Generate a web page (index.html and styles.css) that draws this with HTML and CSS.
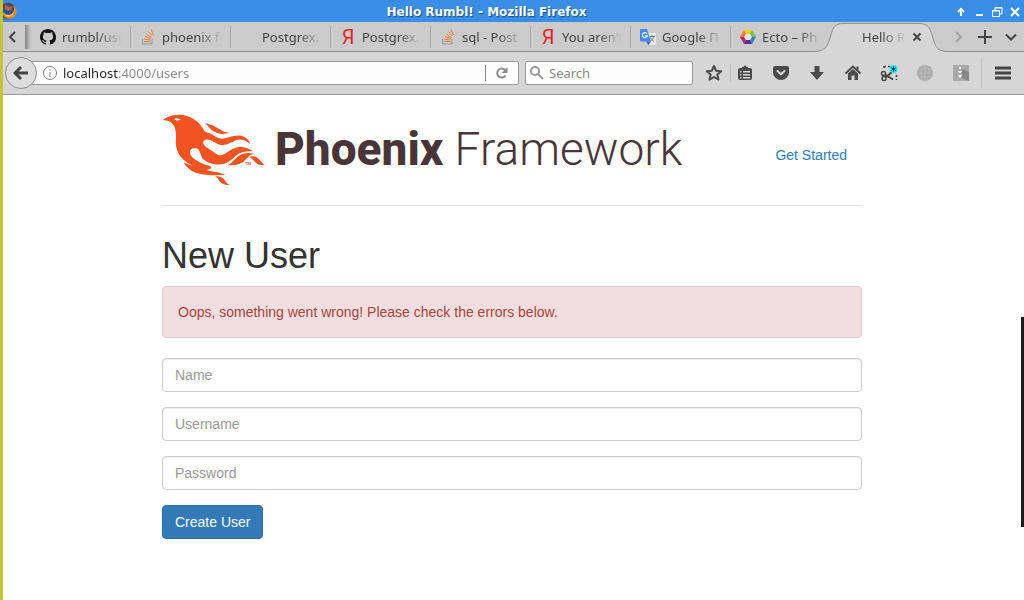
FILE: index.html
```html
<!DOCTYPE html>
<html lang="en">
  <head>
    <meta charset="UTF-8" />
    <meta name="viewport" content="width=device-width, initial-scale=1.0" />
    <title>Hello Rumbl!</title>
    <link rel="stylesheet" href="styles.css">
  </head>
  <body>
    <!-- Window title bar -->
    <div class="titlebar">
      <svg class="app-icon" width="18" height="18" viewBox="0 0 18 18">
        <circle cx="8" cy="9" r="8" fill="#7a2f12" />
        <circle cx="8" cy="8" r="6" fill="#2f4f9c" />
        <path d="M5 2 L8 5 L12 4 L11 8 L8 9 L5 7 Z" fill="#c9642a" />
        <path d="M1 5 C2 12 6 14 10 13 C14 12 15 7 13 3 C18 6 17 12 14 15 C9 19 1 16 1 5 Z" fill="#f08a1c" />
        <path d="M3 10 C6 14 12 14 14 9 C14 14 6 18 3 10 Z" fill="#ffd45a" />
      </svg>
      <span class="window-title">Hello Rumbl! - Mozilla Firefox</span>
      <div class="window-buttons">
        <button aria-label="Roll up"><svg width="12" height="12" viewBox="0 0 12 12"><path d="M6 10V3M3 6l3-3 3 3" /></svg></button>
        <button aria-label="Minimize"><svg width="12" height="12" viewBox="0 0 12 12"><path d="M3 9h7" /></svg></button>
        <button aria-label="Restore"><svg width="12" height="12" viewBox="0 0 12 12"><path class="thin" d="M4 4V1.500h7V8H8.500M1.500 4.500h7v6h-7zM4 2h7M1 5h7" /></svg></button>
        <button aria-label="Close"><svg width="12" height="12" viewBox="0 0 12 12"><path d="M2 2l8 8M10 2l-8 8" /></svg></button>
      </div>
    </div>

    <!-- Tabs -->
    <div class="tabbar">
      <button class="scroll-left" aria-label="Scroll tabs left">
        <svg width="12" height="14" viewBox="0 0 12 14"><path d="M8 2L3 7l5 5" /></svg>
      </button>
      <div class="tab-shade"></div>
      <div class="tabs">
        <a class="tab" href="#">
          <svg class="favicon" viewBox="0 0 16 16"><path fill="#111" d="M8 0C3.580 0 0 3.580 0 8c0 3.540 2.290 6.530 5.470 7.590.4.070.550-.170.550-.380 0-.190-.010-.820-.010-1.490-2.010.370-2.530-.490-2.690-.940-.090-.230-.480-.940-.820-1.130-.280-.150-.680-.520-.010-.530.630-.010 1.080.580 1.230.820.720 1.210 1.870.870 2.330.660.070-.520.280-.870.510-1.070-1.780-.2-3.640-.890-3.640-3.950 0-.870.310-1.590.820-2.150-.080-.2-.360-1.020.080-2.120 0 0 .670-.210 2.200.820a7.600 7.600 0 0 1 4 0c1.530-1.040 2.200-.820 2.200-.820.440 1.100.160 1.920.080 2.120.510.560.820 1.270.820 2.150 0 3.070-1.870 3.750-3.650 3.950.290.250.540.730.540 1.480 0 1.070-.010 1.930-.010 2.200 0 .210.150.460.550.380A8 8 0 0 0 16 8c0-4.420-3.580-8-8-8z" /></svg>
          <span class="tab-label">rumbl/use</span>
        </a>
        <a class="tab" href="#">
          <svg class="favicon" viewBox="0 0 16 16"><path class="so-tray" d="M2.500 10v5h9.500v-5" /><path class="so-stack" d="M4 12.500h6.500M4 10l6.500 1M5 7.500l6 2M6.500 5l5 3.500M8.500 2.500l4 4.500M11 .5l2.500 5.500" /></svg>
          <span class="tab-label">phoenix f</span>
        </a>
        <a class="tab" href="#">
          <span class="favicon"></span>
          <span class="tab-label">Postgrex.</span>
        </a>
        <a class="tab" href="#">
          <span class="favicon yandex">Я</span>
          <span class="tab-label">Postgrex.</span>
        </a>
        <a class="tab" href="#">
          <svg class="favicon" viewBox="0 0 16 16"><path class="so-tray" d="M2.500 10v5h9.500v-5" /><path class="so-stack" d="M4 12.500h6.500M4 10l6.500 1M5 7.500l6 2M6.500 5l5 3.500M8.500 2.500l4 4.500M11 .5l2.500 5.500" /></svg>
          <span class="tab-label">sql - Post</span>
        </a>
        <a class="tab" href="#">
          <span class="favicon yandex">Я</span>
          <span class="tab-label">You aren't</span>
        </a>
        <a class="tab" href="#">
          <svg class="favicon" viewBox="0 0 16 16">
            <path fill="#e8e8e8" d="M6 4h9q1 0 1 1v10q0 1-1 1H9z" />
            <path fill="#4688f1" d="M1 0h6l4 12.500H1q-1 0-1-1V1q0-1 1-1z" />
            <path fill="#3060c0" d="M6 12.500h5L8.500 16z" />
            <path fill="none" stroke="#fff" stroke-width="1.300" d="M7 4.800A2.500 2.500 0 1 0 7.300 6.800H5" />
            <path fill="none" stroke="#6b7a80" d="M9.500 7.500h5.500M12 6v1.500M13.500 8c-.5 2-2 3.500-3 4M10.500 8.500c.5 1.500 2 3 3.500 4" />
          </svg>
          <span class="tab-label">Google П</span>
        </a>
        <a class="tab last" href="#">
          <svg class="favicon" viewBox="0 0 16 16">
            <path fill="#f3d21b" d="M4 1h8L10 5H6z" />
            <path fill="#7bbf3a" d="M12 1l4 7-5 0-1.500-3z" />
            <path fill="#2f7fd0" d="M16 8l-4 7-2-4 1.500-3z" />
            <path fill="#5a2d91" d="M12 15H4l2-4h4z" />
            <path fill="#b02a6a" d="M4 15L0 8h4.500L6 11z" />
            <path fill="#ef7d22" d="M0 8l4-7 2 4-1.500 3z" />
            <path fill="#e4e4e4" d="M6 5h4l2 3-2 3H6L4 8z" />
          </svg>
          <span class="tab-label">Ecto – Ph</span>
        </a>
        <a class="tab active" href="#">
          <svg class="tab-shape" width="134" height="30" viewBox="0 0 134 30">
            <path d="M0 29.500C13 29.500 14 22 17 13C19 5 21 1.500 29 1.500H105C113 1.500 116 5 118 13C121 22 121 29.500 134 29.500V30H0z" fill="#d6d6d6" />
            <path d="M0 29.500C13 29.500 14 22 17 13C19 5 21 1.500 29 1.500H105C113 1.500 116 5 118 13C121 22 121 29.500 134 29.500" fill="none" stroke="#8f8f8f" />
          </svg>
          <span class="favicon"></span>
          <span class="tab-label">Hello R</span>
          <svg class="tab-close" width="10" height="10" viewBox="0 0 10 10"><path d="M1.500 1.500l7 7M8.500 1.500l-7 7" /></svg>
        </a>
      </div>
      <div class="tab-actions">
        <button class="faded" aria-label="Scroll tabs right"><svg width="14" height="16" viewBox="0 0 14 16"><path d="M4 3l5 5-5 5" /></svg></button>
        <button aria-label="New tab"><svg width="16" height="16" viewBox="0 0 16 16"><path d="M8 1v14M1 8h14" /></svg></button>
        <button aria-label="List all tabs"><svg width="14" height="16" viewBox="0 0 14 16"><path d="M2 5.500l5 5 5-5" /></svg></button>
      </div>
    </div>

    <!-- Navigation toolbar -->
    <div class="toolbar">
      <button class="back" aria-label="Back">
        <svg width="16" height="16" viewBox="0 0 16 16"><path d="M2.500 8H15M8 2L2 8l6 6" /></svg>
      </button>
      <div class="urlbar">
        <svg class="info" width="14" height="14" viewBox="0 0 14 14"><circle cx="7" cy="7" r="6.500" /><path d="M7 6v5M7 3v1.500" /></svg>
        <input class="url-input" type="text" aria-label="Address" value="localhost:4000/users" />
        <button class="reload" aria-label="Reload">
          <svg width="14" height="14" viewBox="0 0 14 14"><path d="M10.500 9.500A4.500 4.500 0 1 1 10 4" /><path class="tip" d="M12.500 1v6h-6z" /></svg>
        </button>
      </div>
      <div class="searchbar">
        <svg width="14" height="14" viewBox="0 0 14 14"><circle cx="5" cy="5" r="4" /><path d="M8 8l5 5" /></svg>
        <input class="search-input" type="text" aria-label="Search" placeholder="Search" />
      </div>
      <div class="tools">
        <button class="star" aria-label="Bookmark this page"><svg viewBox="0 0 18 18"><path fill="none" stroke="#4a4a4a" stroke-width="2" stroke-linejoin="round" d="M9 2l2.100 4.700 5.100.5-3.800 3.400 1.100 5L9 13l-4.500 2.600 1.100-5L1.800 7.200l5.100-.5z" /></svg></button>
        <button aria-label="Show bookmarks"><svg viewBox="0 0 18 18"><path fill="#4a4a4a" fill-rule="evenodd" d="M6 3h1.500a1.500 1.500 0 0 1 3 0H12v1h2q2 0 2 2v8q0 2-2 2H4q-2 0-2-2V6q0-2 2-2h2zM4 7v1.500h1.500V7zM7 7v1.500h7V7zM4 10v1.500h1.500V10zM7 10v1.500h7V10zM4 13v1.500h1.500V13zM7 13v1.500h7V13z" /></svg></button>
        <button aria-label="Save to Pocket"><svg viewBox="0 0 18 18"><path fill="#4a4a4a" d="M3 2h12q2 0 2 2v4.500a8 7.500 0 0 1-16 0V4q0-2 2-2z" /><path fill="none" stroke="#d6d6d6" stroke-width="2" stroke-linecap="round" stroke-linejoin="round" d="M5.500 7L9 10.300 12.500 7" /></svg></button>
        <button aria-label="Downloads"><svg viewBox="0 0 18 18"><path fill="#4a4a4a" d="M6.500 2h5v6H16l-7 8-7-8h4.500z" /></svg></button>
        <button aria-label="Home"><svg viewBox="0 0 18 18"><path fill="#4a4a4a" d="M4 9.500L9 5l5 4.500V16h-3.500v-4.500h-3V16H4z" /><path fill="none" stroke="#4a4a4a" stroke-width="2" d="M1.500 9.500L9 2.500l7.500 7" /><path fill="#4a4a4a" d="M12.500 2.500h2v4l-2-2z" /></svg></button>
        <button aria-label="Screenshot"><svg viewBox="0 0 18 18"><path fill="none" stroke="#444" stroke-dasharray="2 2" d="M4 2.500h6M16.500 11v5M4 2v4" stroke-width="1.500" /><circle cx="3.500" cy="9.500" r="2" fill="none" stroke="#444" stroke-width="1.500" /><circle cx="4" cy="14.500" r="2" fill="none" stroke="#444" stroke-width="1.500" /><path fill="none" stroke="#444" stroke-width="2" d="M5 10.500l8 5M5.500 13.500L12 8" /><circle cx="13.500" cy="5" r="4" fill="#1fe4ee" /><path stroke="#136" d="M13.500 2.500v5M11.300 3.700l4.400 2.600M15.700 3.700l-4.400 2.600" /></svg></button>
        <button aria-label="Proxy"><svg viewBox="0 0 18 18"><circle cx="9" cy="9" r="8" fill="#aaa" /><path fill="none" stroke="#bbb" d="M9 1v16M1 9h16M2.500 5h13M2.500 13h13" /><ellipse cx="9" cy="9" rx="4" ry="8" fill="none" stroke="#bbb" /></svg></button>
        <button aria-label="Archive"><svg viewBox="0 0 18 18"><path fill="#aaa" d="M1 1h16v16H1z" /><path fill="#888" d="M10 5l7 3v9l-7-3z" /><path fill="none" stroke="#fff" stroke-width="2" stroke-dasharray="2 2" d="M8 3v11" /><path fill="#fff" d="M6 7h4l-2 2zM6 11h4l-2 3z" /></svg></button>
      </div>
      <button class="menu" aria-label="Open menu"><svg width="16" height="14" viewBox="0 0 16 14"><path d="M0 2h16M0 7h16M0 12h16" /></svg></button>
    </div>

    <div class="container">
      <header class="header">
        <a class="logo" href="/">
          <svg class="bird" viewBox="36 27 312 218" aria-hidden="true">
            <g fill="#f05423">
              <path d="M37 45C48 36 62 30 86 29C118 29 150 48 162 78C168 84 178 84 188 90C200 98 208 104 222 101C240 97 250 92 268 92C288 93 298 106 302 118C290 108 274 101 260 106C246 111 234 122 215 121C198 119 190 106 172 104C160 104 156 112 162 120C168 130 182 134 195 145C206 154 216 154 228 146C246 132 260 127 275 127C290 128 300 134 310 140C290 138 272 142 260 152C244 168 226 182 202 180C180 178 168 172 156 160C150 148 150 134 138 131C124 128 116 136 120 148C126 164 148 172 166 181C174 184 184 184 184 190C178 196 170 195 172 198C190 202 210 202 226 212C208 210 196 214 176 212C150 210 118 206 100 174C108 178 118 182 128 183C100 172 82 150 78 128C74 110 80 90 74 70C70 54 56 46 37 45Z" />
              <path d="M165 56C188 58 198 68 212 75C222 82 228 83 237 83C224 90 206 88 192 80C180 74 176 64 165 56Z" />
              <path d="M232 182C250 176 256 156 278 148C290 144 302 144 312 147C296 152 290 164 278 174C264 182 250 183 232 182Z" />
              <path d="M298 158C312 150 324 158 332 168C336 174 340 177 346 180C330 184 322 178 314 170C308 163 304 159 298 158Z" />
              <path d="M196 216C214 214 222 224 228 232C232 238 236 240 243 243C226 243 214 238 208 230C204 222 202 218 196 216Z" />
            </g>
            <path fill="#fff" d="M72 42C78 38 84 40 91 44C84 48 76 48 72 42Z" />
            <text class="tm" x="287" y="182">TM</text>
          </svg>
          <span class="logo-text"><b>Phoenix</b> Framework</span>
        </a>
        <nav class="nav">
          <a href="#">Get Started</a>
        </nav>
      </header>

      <main>
        <h2>New User</h2>
        <form>
          <div class="alert">Oops, something went wrong! Please check the errors below.</div>
          <div class="form-group">
            <input class="form-control" type="text" id="user_name" aria-label="Name" placeholder="Name" />
          </div>
          <div class="form-group">
            <input class="form-control" type="text" id="user_username" aria-label="Username" placeholder="Username" />
          </div>
          <div class="form-group">
            <input class="form-control" type="password" id="user_password" aria-label="Password" placeholder="Password" />
          </div>
          <button class="btn" type="submit">Create User</button>
        </form>
      </main>
    </div>

    <!-- Slivers of the desktop over both window edges -->
    <div class="edge-left"></div>
    <div class="edge-right"></div>
  </body>
</html>
```

FILE: styles.css
```css
* {
  box-sizing: border-box;
}
body {
  position: relative;
  min-height: 100vh;
  margin: 0;
  background: #fff;
  color: #333;
  font-family: "Liberation Sans", Arial, sans-serif;
  font-size: 14px;
  line-height: 20px;
}
button {
  padding: 0;
  border: 0;
  background: none;
  cursor: pointer;
}
svg {
  display: block;
}

/* title bar */
.titlebar,
.tabbar,
.toolbar {
  display: flex;
  align-items: center;
  font-family: "Noto Sans", sans-serif;
  font-size: 13px;
}
.titlebar {
  height: 22px;
  padding-right: 3px;
  background: #3a8ee6;
}
.window-title {
  flex: 1;
  padding-top: 2px;
  color: #fff;
  font-family: "DejaVu Sans", sans-serif;
  font-size: 12px;
  font-weight: bold;
  text-align: center;
  text-shadow: 1px 1px 1px #1c4f8c;
}
.window-buttons {
  display: flex;
  justify-content: flex-end;
  gap: 6px;
  padding-top: 2px;
}
.window-buttons path {
  fill: none;
  stroke: #fff;
  stroke-width: 2;
}
.window-buttons .thin {
  stroke-width: 1;
}

/* tabs */
.tabbar {
  height: 30px;
  padding-left: 3px;
  border-bottom: 1px solid #8f8f8f;
  background: #cbcbcb;
}
.tabbar button path,
.tab-close path {
  fill: none;
  stroke: #444;
  stroke-width: 2;
}
.scroll-left {
  padding: 0 6px 0 4px;
}
.tab-shade {
  width: 6px;
  height: 24px;
  background: linear-gradient(to right, #888, #cbcbcb);
}
.tabs {
  display: flex;
  align-self: stretch;
  align-items: center;
}
.tab {
  position: relative;
  display: flex;
  align-items: center;
  gap: 6px;
  width: 100px;
  height: 22px;
  padding: 0 8px 0 9px;
  border-right: 1px solid #aaa;
  color: #444;
  text-decoration: none;
}
.tab.last,
.tab.active {
  border-right-color: transparent;
}
.favicon {
  flex: none;
  width: 16px;
  height: 16px;
}
.yandex {
  color: #e52620;
  font-family: Roboto, sans-serif;
  font-size: 20px;
  line-height: 16px;
  text-align: center;
}
.so-tray {
  fill: none;
  stroke: #999;
}
.so-stack {
  fill: none;
  stroke: #f08030;
}
.tab-label {
  flex: 1;
  overflow: hidden;
  white-space: nowrap;
  mask-image: linear-gradient(to left, transparent, #000 24px);
}
.tab-shape {
  position: absolute;
  top: -4px;
  left: -17px;
}
.active .favicon,
.active .tab-label,
.tab-close {
  position: relative;
}
.tab-actions {
  display: flex;
  flex: 1;
  justify-content: flex-end;
  gap: 11px;
  padding-right: 6px;
}
.faded {
  opacity: 0.3;
}

/* toolbar */
.toolbar {
  height: 43px;
  padding-left: 5px;
  border-bottom: 1px solid #999;
  background: #d6d6d6;
}
.back {
  z-index: 1;
  display: flex;
  flex: none;
  align-items: center;
  justify-content: center;
  width: 32px;
  height: 32px;
  border: 1px solid #8f8f8f;
  border-radius: 50%;
  background: #dedede;
}
.back path {
  fill: none;
  stroke: #444;
  stroke-width: 3;
}
.urlbar,
.searchbar {
  display: flex;
  align-items: center;
  height: 24px;
  border: 1px solid #999;
  background: #fdfdfd;
}
.urlbar {
  flex: 1;
  margin-left: -6px;
  padding-left: 11px;
  border-radius: 0 2px 2px 0;
}
.info {
  fill: none;
  stroke: #808080;
}
.url-input,
.search-input {
  flex: 1;
  min-width: 0;
  padding: 0;
  border: 0;
  outline: 0;
  background: none;
  font: 13px "Noto Sans", sans-serif;
}
/* host is darker than the rest of the address */
.url-input {
  margin-left: 6px;
  background: linear-gradient(to right, #222 55px, #888 55px);
  background-clip: text;
  color: transparent;
}
.reload {
  display: flex;
  align-items: center;
  justify-content: center;
  width: 33px;
  height: 16px;
  border-left: 1px solid #888;
}
.reload path {
  fill: none;
  stroke: #8c8c8c;
  stroke-width: 2;
}
.reload .tip {
  fill: #8c8c8c;
  stroke: none;
}
.searchbar {
  width: 168px;
  margin-left: 6px;
  padding-left: 4px;
  gap: 5px;
  border-radius: 2px;
}
.searchbar svg {
  fill: none;
  stroke: #999;
  stroke-width: 2;
}
.search-input::placeholder {
  color: #888;
}
.tools {
  display: flex;
  align-items: center;
  padding: 0 2px 0 4px;
}
.tools button {
  display: flex;
  justify-content: center;
  width: 36px;
}
.tools svg {
  width: 18px;
  height: 18px;
}
.tools .star {
  width: 34px;
  border-right: 1px solid #bbb;
}
.tools .star + button {
  width: 28px;
  margin-right: 4px;
}
.menu {
  display: flex;
  align-items: center;
  justify-content: center;
  width: 43px;
  height: 30px;
  border-left: 1px solid #c4c4c4;
}
.menu path {
  stroke: #444;
  stroke-width: 3;
}

/* page */
.container {
  max-width: 730px;
  margin: 0 auto;
  padding: 0 15px;
}
.header {
  display: flex;
  align-items: center;
  justify-content: space-between;
  margin-bottom: 30px;
  padding: 19px 0;
  border-bottom: 1px solid #e5e5e5;
}
.logo {
  display: flex;
  gap: 9px;
  color: #493538;
  text-decoration: none;
}
.bird {
  width: 104px;
  height: 72px;
}
.tm {
  fill: #f05423;
  font-size: 12px;
  font-weight: bold;
}
.logo-text {
  font-family: Roboto, sans-serif;
  font-size: 46px;
  font-weight: 300;
  line-height: 70px;
}
.logo-text b {
  font-weight: 800;
}
.nav {
  padding: 10px 15px 0;
}
.nav a {
  color: #337ab7;
  text-decoration: none;
}
h2 {
  margin: 0 0 10px;
  font-size: 36px;
  font-weight: 500;
  line-height: 40px;
}
.alert {
  margin-bottom: 20px;
  padding: 15px;
  border: 1px solid #ebccd1;
  border-radius: 4px;
  background: #f2dede;
  color: #a94442;
}
.form-group {
  margin-bottom: 15px;
}
.form-control {
  display: block;
  width: 100%;
  height: 34px;
  padding: 6px 12px;
  border: 1px solid #ccc;
  border-radius: 4px;
  box-shadow: inset 0 1px 1px rgba(0, 0, 0, 0.075);
  background: #fff;
  color: #555;
  font: inherit;
}
.form-control::placeholder {
  color: #999;
}
.btn {
  padding: 6px 12px;
  border: 1px solid #2e6da4;
  border-radius: 4px;
  background: #337ab7;
  color: #fff;
  font: inherit;
}

/* desktop edges */
.edge-left,
.edge-right {
  position: absolute;
  width: 3px;
}
.edge-left {
  top: 0;
  bottom: 0;
  left: 0;
  z-index: 2;
  background: #c1c637;
}
.edge-right {
  top: 317px;
  right: 0;
  height: 210px;
  background: #1c1c1c;
}
```
